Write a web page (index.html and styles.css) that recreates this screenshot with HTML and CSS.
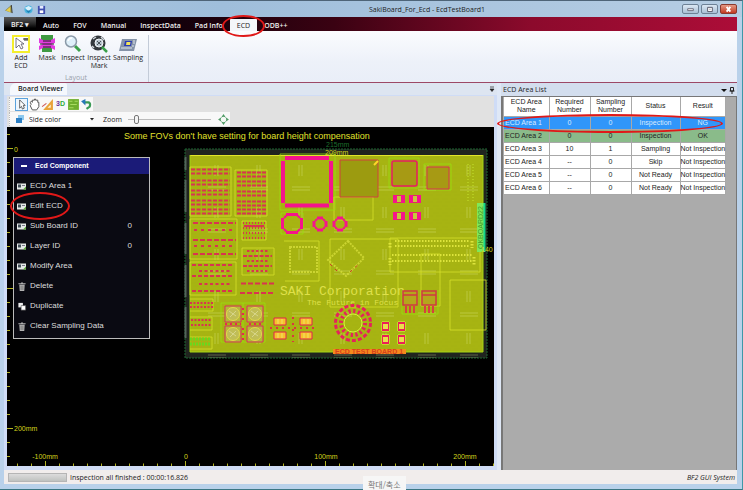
FILE: index.html
```html
<!DOCTYPE html>
<html lang="en">
<head>
<meta charset="utf-8">
<title>SakiBoard_For_Ecd - EcdTestBoard1</title>
<link rel="stylesheet" href="styles.css">
</head>
<body>
<div class="window">
  <header class="titlebar">
    <div class="quick">
      <svg class="quick-icon logo" viewBox="0 0 10 10"><path d="M0 6 7 0 8 9Z" fill="#8c8a50"/><path d="M1 6 6 2 6 8Z" fill="#e8cf4a"/><path d="M7 0 8 9" stroke="#333"/></svg>
      <button class="quick-btn" aria-label="Refresh"><svg class="quick-icon" viewBox="0 0 10 10"><circle cx="5" cy="5" r="4.500" fill="#4bb4de"/><path d="M1 3 5 7 9 3 5 1Z" fill="#d8f1fb"/><path d="M2 6 5 9 8 6Z" fill="#1d7fb5"/></svg></button>
      <button class="quick-btn" aria-label="Save"><svg class="quick-icon" viewBox="0 0 10 10"><path d="M1 1H9V10H1Z" fill="#3f4fb0"/><path d="M3 1H7V4H3Z" fill="#e6ebff"/><path d="M3 6H7V9H3Z" fill="#fff"/></svg></button>
    </div>
    <h1 class="title">SakiBoard_For_Ecd - EcdTestBoard1</h1>
    <div class="controls">
      <button class="ctl" aria-label="Minimize"><svg viewBox="0 0 16 9"><path d="M5 4H11V6H5Z" fill="#fff" stroke="#667"/></svg></button>
      <button class="ctl" aria-label="Maximize"><svg viewBox="0 0 16 9"><path d="M6 2.500H11V7H6Z" fill="#fff" stroke="#556"/><path d="M8 4.500H9" stroke="#556"/></svg></button>
      <button class="ctl close" aria-label="Close"><svg viewBox="0 0 16 9"><path d="M6 2 10 7M10 2 6 7" stroke="#fff" stroke-width="2"/></svg></button>
    </div>
  </header>

  <nav class="tabs">
    <button class="app-menu">BF2 ▾</button>
    <button class="tab">Auto</button>
    <button class="tab">FOV</button>
    <button class="tab">Manual</button>
    <button class="tab">InspectData</button>
    <button class="tab">Pad Info</button>
    <button class="tab active">ECD<span class="mark mark-tab"></span></button>
    <button class="tab">ODB++</button>
  </nav>

  <section class="ribbon">
    <div class="group">
      <div class="tools">
        <button class="tool"><svg class="tool-icon" viewBox="0 0 18 18"><path d="M1 1H17V17H1Z" fill="#fff" stroke="#f4ee2c" stroke-width="2"/><path d="M4 3V13L7 10 9 14 11 13 9 9H12Z" fill="#fff" stroke="#556" stroke-width=".8"/><path d="M11 4H16M13 3V6M15 3V6" stroke="#333"/></svg><span>Add<br>ECD</span></button>
        <button class="tool"><svg class="tool-icon" viewBox="0 0 18 18"><path d="M3 0H15V5H3ZM4 12H14V17H4Z" fill="#3f9a42"/><path d="M1 3 5 5H13L17 3V8L13 9 17 11V15L13 13H5L1 15V11L5 9 1 8Z" fill="#e23be0"/><path d="M2 9H16M5 6H13M5 12H13" stroke="#222"/></svg><span>Mask</span></button>
        <button class="tool"><svg class="tool-icon" viewBox="0 0 18 18"><path d="M11 11 16 16" stroke="#3aa04a" stroke-width="3"/><circle cx="7" cy="6.500" r="5.500" fill="#dff0fa" stroke="#8b9aa8" stroke-width="1.500"/><path d="M4 6Q5 3 8 3" fill="none" stroke="#fff" stroke-width="1.500"/></svg><span>Inspect</span></button>
        <button class="tool"><svg class="tool-icon" viewBox="0 0 18 18"><circle cx="8" cy="8" r="7.500" fill="#34383d"/><path d="M3 4 6 2M11 2 14 5M2 11 4 13" stroke="#cfd5da" stroke-width="1.500"/><path d="M12 12 17 17" stroke="#3aa04a" stroke-width="2.500"/><circle cx="9" cy="8" r="4" fill="#b9c5ce" stroke="#f0f4f7"/><path d="M7 6 11 10M11 6 7 10" stroke="#4b5359"/></svg><span>Inspect<br>Mark</span></button>
        <button class="tool"><svg class="tool-icon" viewBox="0 0 18 18"><path d="M3 4H18L15 16H0Z" fill="#8593a8"/><path d="M6 6H13L12 11H5Z" fill="#2a3bb8"/><path d="M7.500 7H11.500L11 10H7Z" fill="#f2e45a"/><path d="M2 13H13M14 6H16M14 8H16M13 11H15" stroke="#dfe5ee"/></svg><span>Sampling</span></button>
      </div>
      <div class="group-name">Layout</div>
    </div>
  </section>

  <main class="work">
    <section class="viewer">
      <div class="viewer-tabs">
        <h2 class="viewer-tab">Board Viewer</h2>
        <svg class="mini" viewBox="0 0 6 6"><path d="M1 1H5M1 3H5L3 5.500Z" fill="#222" stroke="#222" stroke-width=".7"/></svg>
      </div>
      <div class="viewer-body">
        <div class="toolbars">
          <div class="bar">
            <button class="bar-btn on" aria-label="Select"><svg viewBox="0 0 12 12"><path d="M4 1V10L6 8 7 11 9 10 8 7H10Z" fill="#fff" stroke="#333" stroke-width=".8"/></svg></button>
            <button class="bar-btn" aria-label="Pan"><svg viewBox="0 0 12 12"><path d="M3 6 2 4 3 3 4 4V2H6V1H7V2H9V4H10V8L8 11H4L2 7Z" fill="#fff" stroke="#555" stroke-width=".9"/></svg></button>
            <button class="bar-btn" aria-label="Measure"><svg viewBox="0 0 12 12"><path d="M2 11H11V1Z" fill="#e9a33a"/><path d="M6 9H9V6Z" fill="#fff3cf"/><path d="M1 8 5 5" stroke="#c55"/></svg></button>
            <button class="bar-btn three-d"><span class="three">3</span>D</button>
            <button class="bar-btn" aria-label="Board"><svg viewBox="0 0 12 12"><path d="M1 1H11V11H1Z" fill="#6fae2d"/><path d="M2 3H5M7 3H10M3 6H9M2 9H6" stroke="#a9dc62"/></svg></button>
            <button class="bar-btn" aria-label="Undo"><svg viewBox="0 0 12 12"><path d="M4 4H8Q10 5 9 8L6 10" fill="none" stroke="#3a9a55" stroke-width="2"/><path d="M1 3 5 1V7Z" fill="#2778b8"/></svg></button>
          </div>
          <div class="bar">
            <label class="color-label" for="color"><svg viewBox="0 0 10 10"><path d="M3 1H9V6H3Z" fill="#8cc8ee"/><path d="M1 4H7V9H1Z" fill="#2c7fc4"/></svg></label>
            <select id="color" class="color"><option>Side color</option></select>
            <svg class="caret" viewBox="0 0 4 4"><path d="M0 1H4L2 3.500Z" fill="#222"/></svg>
            <label class="zoom-label" for="zoom">Zoom</label>
            <input id="zoom" class="zoom" type="range" min="0" max="100" value="8">
            <button class="bar-btn" aria-label="Fit"><svg viewBox="0 0 12 12"><path d="M6 1 8 4 11 6 8 8 6 11 4 8 1 6 4 4Z" fill="#4c9a63"/><circle cx="6" cy="6" r="2.500" fill="#f4f8f4"/></svg></button>
          </div>
        </div>
        <div class="stage">
          <svg class="board" viewBox="7 127 487 340" preserveAspectRatio="xMinYMin slice">
            <defs>
              <pattern id="streets" x="185" y="149" width="42" height="42" patternUnits="userSpaceOnUse">
                <path d="M43 0V42" stroke="#d3dc70" stroke-opacity=".2"/><path d="M30 16V27M33 16V27M23 41H41M23 38H41" stroke="#e6eea0" stroke-opacity=".45" stroke-width=".7"/>
              </pattern>
              <pattern id="grain" x="190" y="155" width="9" height="7" patternUnits="userSpaceOnUse">
                <path d="M0 2H6M3 5H9" stroke="#93a60a" stroke-width=".8" stroke-opacity=".2"/>
              </pattern>
              <g id="chip"><path d="M0 0H4V8H0ZM8 0H12V8H8Z" fill="#f5148c"/><path d="M4 1H8V7H4Z" fill="#c7c93a"/><path d="M4 .500H8M4 7.500H8" stroke="#e0305a"/></g>
              <g id="can"><path d="M0 0H16V16H0Z" fill="#b5b83a" stroke="#d8305a"/><circle cx="8" cy="8" r="6.500" fill="#c0bd56" stroke="#e4d94a"/><path d="M4 5 11 10M5 11 11 5" stroke="#d7d58a"/></g>
              <g id="cap"><path d="M0 0H12V7H0Z" fill="#f7c32d" stroke="#e0244e"/><path d="M4 1V6M8 1V6" stroke="#f2e06a"/></g>
              <g id="pad"><path d="M0 0H7V9H0Z" fill="#eadf4c" stroke="#dcff40"/><path d="M0 1H7M0 8H7" stroke="#ec1f56" stroke-width="2"/><path d="M.500 0V9M6.500 0V9" stroke="#ec1f56"/></g>
              <g id="transistor"><path d="M0 0H14V14H0ZM0 4H14" fill="#b5a61c" stroke="#cf3a42" stroke-width="1.500"/><path d="M3 15V22M7 15V22M11 15V22" stroke="#d8403f" stroke-width="2"/></g>
              <g id="round"><path d="M-3-6H3M-3 6H3M-6-3V3M6-3V3" stroke="#f5148c" stroke-width="3"/><path d="M-5-3-3-5M3-5 5-3M5 3 3 5M-3 5-5 3" stroke="#f5148c" stroke-width="2"/></g>
            </defs>

            <g class="ruler">
              <path d="M7 466.500H494"/>
              <path d="M17 465H494" stroke-width="3" stroke-dasharray="1 13"/>
              <path d="M45.500 461V467M185.500 461V467M325.500 461V467M465.500 461V467"/>
              <path d="M8.500 134V462" stroke-width="3" stroke-dasharray="1 13"/>
              <path d="M7 148.500H13M7 288.500H13M7 428.500H13"/>
            </g>

            <path d="M185 149H487V358H185Z" fill="#20241f"/>
            <path d="M185 149H487V358H185Z" fill="none" stroke="#1c6632" stroke-dasharray="2 1"/>
            <path d="M185.500 157V170M185.500 180V212M185.500 223V254M185.500 265V297M185.500 307V338" stroke="#53645a" stroke-width="2"/>
            <path d="M190 155H483V352H190Z" fill="#a7b412"/>
            <path d="M190 155H483V352H190Z" fill="url(#grain)"/>
            <path d="M185 149H487V358H185Z" fill="url(#streets)"/>
            <path d="M190 155.500H483" stroke="#e2e52a"/><path d="M190 155V352H483V155" fill="none" stroke="#a4d414"/>

            <g class="outline">
              <path d="M190 167H231V216H190Z M235 170H267V216H235Z M190 219H237V259H190Z M190 262H236V295H190Z M242 221H266V240H242Z M242 248H274V275H242Z M284 241H319V281H285 M330 239H398V307H330Z M334 197H373V220H334Z M421 254H440V306H421Z M450 280H486V330H450Z M190 299H213V311H190M190 317H212V330H190M190 337H212V349H190M390 238H480V272H390Z"/>
              <path class="lime" d="M280 154H335V210H280Z M389 158H419V188H389Z M424 164H451V190H424Z M221 303H265V342H221ZM243 303V342M402 290V314H438V290M281 213H303V234H281Z"/>
            </g>

            <g class="parts">
              <path d="M191 169.500H230M191 173.500H230M191 180.500H230M191 184.500H230M191 190.500H230M191 194.500H230M191 200.500H230M191 204.500H230M191 209.500H230M191 213.500H230" stroke-dasharray="4 1.500"/>
              <path d="M237 172.500H266M237 176.500H266M237 181.500H266M237 185.500H266M237 191.500H266M237 195.500H266M237 201.500H266M237 205.500H266M237 209.500H266M237 213.500H266" stroke-dasharray="4 1"/>
              <path d="M193 223H236M193 240H236M193 254H236" stroke-dasharray="5 2"/>
              <path d="M194 230H234M194 246H234" stroke-width="6" stroke-dasharray="3 4"/>
              <path d="M192 265H234M192 276H234M192 291H234" stroke-dasharray="4 2"/>
              <path d="M199 271H230M199 284H230" stroke-width="5" stroke-dasharray="3 2.500"/>
              <path d="M243 223H265M243 228H265M243 233H265M243 238H265" stroke-dasharray="1 2"/>
              <path d="M244 226H264" stroke-width="1"/>
              <path d="M247 251H268M247 261H268M247 271H268" stroke-width="4" stroke-dasharray="2.500 2"/>
              <path d="M243 256H272M243 266H272" stroke-dasharray="4 1.500"/>
              <path d="M241 283.500H274M240 293H274" stroke-width="4" stroke-dasharray="5 2"/>
              <path d="M190 303H213M190 307H213M191 320H212M191 325H212" stroke-dasharray="2 1.500" stroke-width="3"/>
            </g>
            <path d="M190 339H211M190 344H211" stroke="#69d81e" stroke-width="3" stroke-dasharray="2 1"/>

            <path d="M285 158H329M285 205.500H329" class="qfp"/><path d="M283 161V203M331 161V203" class="qfp"/>
            <path d="M286 214.500H298M286 232.500H298M282.500 218V229M301.500 218V229" stroke="#f5148c" stroke-width="3"/>
            <path d="M284 218 287 215M297 215 300 218M300 229 297 232M287 232 284 229" stroke="#f5148c" stroke-width="2"/>
            <use href="#round" x="320" y="224"/><use href="#round" x="340" y="224"/>
            <path d="M340 160H378V197H340Z" fill="#9c9b10" stroke="#d0433c"/><path d="M374 165 378 161" stroke="#ffd62a" stroke-width="2"/>
            <rect x="392" y="161" width="25" height="25" rx="2" fill="#a79a14" stroke="#e81d63" stroke-width="1.500"/>
            <path d="M427 167H449V189H427Z" fill="#a79a14" stroke="#d83550"/>
            <use href="#chip" x="393" y="195"/><use href="#chip" x="409" y="195"/><use href="#chip" x="393" y="212"/><use href="#chip" x="409" y="212"/>
            <path d="M468 164V201M473 164V201" stroke="#c2dc2a" stroke-opacity=".6" stroke-dasharray="1 2" stroke-width="2"/>

            <path d="M290 247H317V272H290ZM348 241 364 258 346 276 328 260Z" fill="none" stroke="#dce23e" stroke-opacity=".7" stroke-width="2" stroke-dasharray="2 1"/>
            <path d="M330 264 340 274M350 272 360 263" stroke="#d03c28" stroke-dasharray="3 4"/>
            <g stroke="#dde43c" stroke-width="2" stroke-dasharray="1.500 1.500"><path d="M395 241H470M395 246H470M392 255H472M392 261H472" /><path d="M390 243V248M472 241V248M390 258V265M474 257V265" stroke-width="3"/></g>

            <text class="silk big" x="280" y="295">SAKI Corporation</text>
            <text class="silk" x="307" y="305">The Future in Focus</text>

            <use href="#can" x="225" y="306"/><use href="#can" x="247" y="306"/><use href="#can" x="225" y="326"/><use href="#can" x="247" y="326"/>
            <path d="M225 324H241M249 324H263M243 308V320M243 328V340" stroke="#e62a50" stroke-width="2" stroke-dasharray="2 3"/>
            <use href="#cap" x="274" y="318"/><use href="#cap" x="300" y="318"/><use href="#cap" x="274" y="332"/><use href="#cap" x="300" y="332"/>
            <path d="M270 328H318M293 317V342" stroke="#dc3640" stroke-width="2" stroke-dasharray="2 4"/>
            <g fill="none" stroke="#e5225c"><circle cx="353" cy="323" r="17.500" stroke-width="3" stroke-dasharray="4 2.100"/><circle cx="353" cy="323" r="12" stroke-width="4" stroke-dasharray="2.200 2.500"/></g>
            <circle cx="353" cy="323" r="9" fill="none" stroke="#d8f23a"/>
            <use href="#pad" x="382" y="322"/><use href="#pad" x="398" y="322"/><use href="#pad" x="382" y="335"/><use href="#pad" x="398" y="335"/>
            <use href="#transistor" x="403" y="291"/><use href="#transistor" x="422" y="291"/>
            <path d="M333 349H406V354H333Z" fill="#f48a1e"/>
            <text class="label-red" x="335" y="354">ECD TEST BOARD 1</text>

            <path d="M477 203H485V252H477Z" fill="#7fe85a"/><path d="M484.500 203V252" stroke="#14d48a" stroke-width="2"/>
            <text class="label-green" transform="translate(483 249) rotate(-90)">OKBOARD22</text>

            <text class="axis dim-green" x="326" y="147">215mm</text>
            <text class="axis" x="325" y="155">209mm</text>
            <text class="axis" x="481" y="252">140</text>
            <text class="message" x="124" y="139">Some FOVs don't have setting for board height compensation</text>
            <text class="axis" x="14" y="152">0</text>
            <text class="axis" x="14" y="431">200mm</text>
            <text class="axis mid" x="45" y="459">-100mm</text>
            <text class="axis mid" x="186" y="459">0</text>
            <text class="axis mid" x="326" y="459">100mm</text>
            <text class="axis mid" x="465" y="459">200mm</text>
          </svg>

          <div class="menu">
            <h3 class="menu-head"><span class="dash"></span>Ecd Component</h3>
            <button class="item"><svg viewBox="0 0 10 8"><use href="#card"/></svg>ECD Area 1</button>
            <button class="item"><svg viewBox="0 0 10 8"><use href="#card"/></svg>Edit ECD<span class="mark mark-item"></span></button>
            <button class="item"><svg viewBox="0 0 10 8"><use href="#card"/></svg>Sub Board ID<span class="num">0</span></button>
            <button class="item"><svg viewBox="0 0 10 8"><use href="#card"/></svg>Layer ID<span class="num">0</span></button>
            <button class="item"><svg viewBox="0 0 10 8"><use href="#card"/></svg>Modify Area</button>
            <button class="item"><svg viewBox="0 0 10 10"><use href="#bin"/></svg>Delete</button>
            <button class="item"><svg viewBox="0 0 10 10"><path d="M1 1H6V6H1Z" fill="#eee"/><path d="M4 4H9V9H4Z" fill="#fff" stroke="#555" stroke-width=".7"/></svg>Duplicate</button>
            <button class="item"><svg viewBox="0 0 10 10"><use href="#bin"/></svg>Clear Sampling Data</button>
          </div>
        </div>
      </div>
    </section>

    <aside class="list">
      <div class="list-head"><h2>ECD Area List</h2>
        <svg class="list-icons" viewBox="0 0 14 8"><path d="M0 3H6L3 6Z" fill="#111"/><path d="M9.500 1.500H12.500V5H9.500ZM8.500 5H13.500M11 5V8" fill="none" stroke="#222"/></svg>
      </div>
      <div class="list-body">
        <table class="areas">
          <colgroup><col class="c-name"><col class="c-req"><col class="c-sam"><col class="c-sta"><col class="c-res"></colgroup>
          <thead><tr><th>ECD Area<br>Name</th><th>Required<br>Number</th><th>Sampling<br>Number</th><th>Status</th><th>Result</th></tr></thead>
          <tbody>
            <tr class="sel"><td>ECD Area 1<span class="mark mark-row"></span></td><td>0</td><td>0</td><td>Inspection</td><td>NG</td></tr>
            <tr class="ok"><td>ECD Area 2</td><td>0</td><td>0</td><td>Inspection</td><td>OK</td></tr>
            <tr><td>ECD Area 3</td><td>10</td><td>1</td><td>Sampling</td><td>Not Inspection</td></tr>
            <tr><td>ECD Area 4</td><td>--</td><td>0</td><td>Skip</td><td>Not Inspection</td></tr>
            <tr><td>ECD Area 5</td><td>--</td><td>0</td><td>Not Ready</td><td>Not Inspection</td></tr>
            <tr><td>ECD Area 6</td><td>--</td><td>0</td><td>Not Ready</td><td>Not Inspection</td></tr>
          </tbody>
        </table>
      </div>
    </aside>
  </main>

  <footer class="status">
    <div class="progress"></div>
    <span>Inspection all finished : 00:00:16.826</span>
    <em class="brand">BF2 GUI System</em>
  </footer>
  <div class="tip" lang="ko">확대/축소</div>
</div>
<svg class="sprite" aria-hidden="true">
  <g id="card"><path d="M0 1H9V7H0Z" fill="#e4e8e6"/><path d="M1 2H4V5H1Z" fill="#44505a"/><path d="M5 3H8" stroke="#778"/><path d="M6 7 9 4V7Z" fill="#5da83c"/></g>
  <g id="bin"><path d="M2 3H8L7.500 10H2.500ZM1 1.500H9V2.500H1ZM4 .500H6V1.500H4Z" fill="#b5b5b5"/><path d="M4 4V9M6 4V9" stroke="#555" stroke-width=".7"/></g>
</svg>
</body>
</html>
```
FILE: styles.css
```css
* { box-sizing: border-box; }
body { margin: 0; font: 7px/9px "Open Sans", "Noto Sans CJK KR", sans-serif; color: #222; }
button { margin: 0; padding: 0; border: 0; background: none; font: inherit; color: inherit; }
h1, h2, h3 { margin: 0; font: inherit; }
svg { display: block; overflow: visible; }
.sprite { position: absolute; width: 0; height: 0; }

.window {
  position: relative; min-height: 100vh; display: flex; flex-direction: column;
  padding: 0 5px 5px 4px; background: #b9d1ea;
  border-top: 1px solid #4e6478; border-right: 1px solid #3f98a8; border-bottom: 1px solid #3a7683;
}

.titlebar {
  display: flex; align-items: center; justify-content: space-between; height: 16px;
  margin: 0 -5px 0 -4px; padding: 0 5px; background: linear-gradient(90deg, #a9c4de, #9fbedb 30%, #b6cde3);
}
.quick, .controls { flex: 1; display: flex; align-items: center; }
.quick { gap: 4px; }
.quick-icon { width: 9px; height: 9px; }
.logo { margin-right: 6px; }
.title { padding-left: 112px; }
.controls { justify-content: flex-end; gap: 2px; }
.ctl { width: 17px; height: 10px; border: 1px solid #6d8196; border-radius: 2px; background: linear-gradient(#dbe7f3, #a9bfd5); }
.ctl.close { border-color: #8a3a30; background: linear-gradient(#e59a86, #c23a22); }

.tabs { display: flex; align-items: flex-end; height: 14px; background: linear-gradient(90deg, #000 0, #10000a 22%, #3a0212 45%, #8c0a2c 72%, #ac0d38); color: #eee; font-weight: 600; }
.app-menu { align-self: stretch; width: 32px; background: linear-gradient(#5a5a5a, #262626 50%, #000 80%); }
.tab { position: relative; height: 12px; padding: 0 7px; }
.tab.active { background: #f4f6fa; color: #222; font-weight: 400; }

.mark { position: absolute; border: 2px solid #e01818; border-radius: 50%; pointer-events: none; z-index: 3; }
.mark-tab { inset: -4px -8px -6px; }
.mark-item { left: -4px; top: -4px; width: 60px; height: 28px; }
.mark-row { left: -7px; top: -3px; width: 226px; height: 19px; }

.ribbon { display: flex; height: 52px; background: linear-gradient(#fbfcfe, #edf1f9 60%, #e9eef8); border-bottom: 1px solid #9c4866; }
.group { display: flex; flex-direction: column; justify-content: space-between; margin: 4px 0 0; padding: 0 4px; border-right: 1px solid #c3cbd8; }
.tools { display: flex; }
.tool { width: 26px; display: flex; flex-direction: column; align-items: center; gap: 1px; line-height: 8px; }
.tool:last-child { width: 32px; }
.tool-icon { width: 18px; height: 18px; }
.group-name { text-align: center; color: #9aa1ab; }

.work { flex: 1; display: flex; background: #dfe8f6; }
.viewer { flex: 1; min-width: 0; display: flex; flex-direction: column; }
.viewer-tabs { display: flex; align-items: center; justify-content: space-between; height: 12px; padding: 0 2px 0 6px; background: #dde5f1; }
.viewer-tab { align-self: stretch; padding: 1px 4px 0 8px; background: #f5f8fd; border-radius: 6px 2px 0 0; font-weight: 600; }
.mini { width: 6px; height: 6px; }
.viewer-body { flex: 1; display: flex; flex-direction: column; padding: 1px 3px 4px; background: #cfdcf6; }
.toolbars { display: flex; flex-direction: column; align-items: flex-start; gap: 1px; padding: 1px 2px; background: #e1e1e1; }
.bar { display: flex; align-items: center; height: 14px; padding-left: 5px; background: #f8f8f8; border-left: 1px dotted #bbb; }
.bar-btn { width: 13px; height: 13px; }
.bar-btn.on { border: 1px solid #5aa2dc; background: #eef6fd; }
.bar-btn.three-d { font: bold 7px/12px "Liberation Sans", sans-serif; color: #2fae3a; }
.three { color: #66309a; }
.color-label { width: 10px; }
.color { width: 61px; height: 12px; margin-left: 4px; padding: 0; appearance: none; border: 0; background: #fff; font: inherit; color: inherit; }
.caret { width: 4px; height: 4px; }
.zoom-label { margin: 0 6px 0 9px; }
.zoom { width: 83px; height: 10px; margin: 0 6px 0 0; appearance: none; background: linear-gradient(#bbb, #bbb) center / 100% 1px no-repeat; }
.zoom::-webkit-slider-thumb { appearance: none; width: 5px; height: 9px; border: 1px solid #777; border-radius: 2px; background: #f4f4f4; }

.stage { position: relative; flex: 1; background: #000; }
.board { position: absolute; inset: 0; width: 100%; height: 100%; overflow: hidden; font-family: "Liberation Sans", sans-serif; }
.ruler path { stroke: #b5b520; fill: none; }
.outline path { fill: none; stroke: #d6e02c; stroke-opacity: .8; }
.outline .lime { stroke: #9ae010; }
.parts path { fill: none; stroke: #d93450; stroke-width: 2; }
.qfp { stroke: #f5148c; stroke-width: 4; }
.axis { font-size: 7px; fill: #d4d41c; }
.mid { text-anchor: middle; }
.dim-green { fill: #1d6e2c; }
.message { font-size: 9px; fill: #e0e02c; }
.silk { font: 8px "Liberation Mono", monospace; fill: #dfe04a; }
.silk.big { font-size: 13px; }
.label-red { font: bold 7px "Liberation Sans", sans-serif; fill: #d8421c; }
.label-green { font-size: 7px; fill: #3f9a2c; }

.menu { position: absolute; left: 6px; top: 30px; width: 137px; border: 1px solid #bbb; background: #0a0a12; color: #ddd; font: 8px/12px "Liberation Sans", sans-serif; padding-bottom: 2px; }
.menu-head { display: flex; align-items: center; gap: 8px; height: 16px; margin-bottom: 2px; padding-left: 7px; background: #1b1b78; color: #fff; font: bold 7px/12px "Liberation Sans", sans-serif; }
.dash { width: 6px; height: 2px; background: #fff; }
.item { position: relative; display: flex; align-items: center; gap: 3px; width: 100%; height: 20px; padding-left: 3px; text-align: left; }
.item svg { width: 10px; height: 9px; }
.num { margin-left: auto; padding-right: 17px; }

.list { width: 236px; display: flex; flex-direction: column; margin-left: 4px; }
.list-head { display: flex; align-items: center; justify-content: space-between; height: 13px; padding: 0 2px; background: #d3deee; }
.list-icons { width: 14px; height: 8px; }
.list-body { flex: 1; padding-left: 1px; background: #ababab; border: solid #777; border-width: 1px 1px 0 2px; font: 7px/8px "Liberation Sans", sans-serif; }
.areas { width: 222px; table-layout: fixed; border-collapse: collapse; background: #fff; }
.areas th, .areas td { height: 13px; padding: 0; border: 1px solid #a8a8a8; border-width: 0 1px 1px 0; font-weight: 400; text-align: center; white-space: nowrap; }
.areas th { height: 19px; }
.areas td:first-child { position: relative; text-align: left; padding-left: 1px; }
.c-name { width: 45px; } .c-req { width: 41px; } .c-sam { width: 41px; } .c-sta { width: 49px; }
.areas .sel { background: #3096fa; color: #d8eaff; }
.areas .ok { background: #8abb8a; }

.status { display: flex; align-items: center; gap: 3px; height: 14px; padding: 0 2px 0 4px; background: #f1edec; }
.progress { width: 59px; height: 9px; border: 1px solid #b5b5b5; background: linear-gradient(#dcdcdc, #bfc2c0); }
.brand { margin-left: auto; }
.tip { position: absolute; left: 363px; bottom: -1px; height: 14px; padding: 3px 5px 0; background: #f6f6f6; color: #777; font: 8px/12px "Noto Sans CJK KR", sans-serif; overflow: hidden; }
```
